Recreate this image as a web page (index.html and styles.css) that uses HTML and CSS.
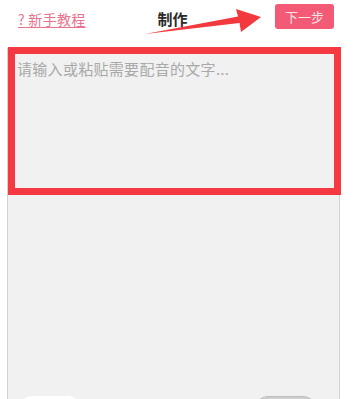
FILE: index.html
```html
<!DOCTYPE html>
<html lang="zh">
<head>
<meta charset="utf-8">
<title>制作</title>
<link rel="stylesheet" href="styles.css">
</head>
<body>
<div class="page">
  <header class="topbar">
    <a class="help" href="#">? 新手教程</a>
    <span class="title">制作</span>
    <span class="spacer"></span>
    <button class="next">下一步</button>
  </header>
  <svg class="arrow" width="354" height="45" viewBox="0 0 354 45">
    <polygon points="145,34 238,16.5 236,9 261,17 241,32 239.5,23" fill="#f23a3e"/>
  </svg>
  <section class="panel">
    <div class="editor">
      <div class="placeholder">请输入或粘贴需要配音的文字...</div>
    </div>
    <div class="actions">
      <span class="pill pill-light"></span>
      <span class="pill pill-gray"></span>
    </div>
    <div class="highlight"></div>
  </section>
</div>
</body>
</html>
```
FILE: styles.css
```css
html, body {
  margin: 0;
  padding: 0;
  background: #ffffff;
}
body {
  font-family: "Noto Sans CJK SC", "Noto Sans", sans-serif;
  overflow: hidden;
  width: 354px;
  height: 399px;
}
.page {
  position: relative;
  width: 354px;
  height: 399px;
  overflow: hidden;
}
.topbar {
  display: flex;
  align-items: center;
  height: 34px;
  padding: 0 20px 0 18px;
  margin-bottom: 14px;
}
.help {
  color: #e8738f;
  font-size: 14px;
  text-decoration: underline;
  text-underline-offset: 2px;
  margin-top: 4px;
  letter-spacing: 0.3px;
}
.title {
  margin-left: 72px;
  font-size: 15px;
  font-weight: 700;
  color: #2a2a2a;
  margin-top: 2px;
}
.spacer {
  flex: 1;
}
.next {
  width: 59px;
  height: 25px;
  border: none;
  border-radius: 3px;
  background: #f25a75;
  color: #fbe3e8;
  font-family: inherit;
  font-size: 13px;
  padding: 0;
  margin-top: -1px;
}
.arrow {
  position: absolute;
  left: 0;
  top: 0;
}
.panel {
  position: relative;
  margin: 0 14px 0 7px;
  border: 1px solid #d2d2d2;
  border-bottom: none;
  background: #f0f1f0;
  height: 360px;
}
.editor {
  height: 337px;
  padding: 10px 9px 0;
  box-sizing: border-box;
}
.placeholder {
  color: #a9a9a9;
  font-size: 15px;
  line-height: 20px;
  letter-spacing: 0.3px;
}
.actions {
  display: flex;
  justify-content: space-between;
  padding: 10px 22px 0 10px;
}
.pill {
  display: block;
  width: 64px;
  height: 30px;
  border-radius: 14px;
}
.pill-light {
  background: #ffffff;
}
.pill-gray {
  width: 63px;
  background: #cfcfcf;
  border: 1px solid #bdbdbd;
  box-sizing: border-box;
}
.highlight {
  position: absolute;
  left: 0;
  top: -2px;
  width: 333px;
  height: 148px;
  border: 7px solid #f43a40;
  box-sizing: border-box;
}
```
